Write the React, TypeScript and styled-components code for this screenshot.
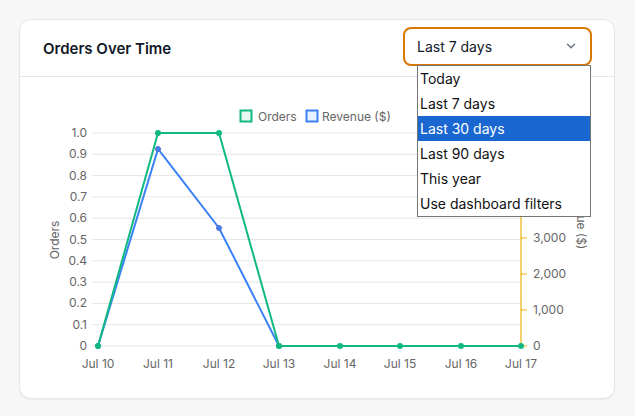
import React from "react";
import styled, { createGlobalStyle } from "styled-components";

const Global = createGlobalStyle`
  body { margin: 0; background: #f7f7f8; font-family: Inter, "Noto Sans", sans-serif; }
`;
const Page = styled.div`padding: 19px 20px 0 19px; width: 635px; height: 416px; box-sizing: border-box;`;
const Card = styled.div`
  position: relative; width: 596px; height: 380px; box-sizing: border-box;
  background: #fff; border: 1px solid #e5e7eb; border-radius: 12px;
  box-shadow: 0 1px 2px rgba(0,0,0,0.06);
`;
const Header = styled.div`
  height: 57px; box-sizing: border-box; border-bottom: 1px solid #e5e7eb;
  display: flex; align-items: center; justify-content: space-between; padding: 0 22px 0 23px;
`;
const Title = styled.h3`margin: 0; font-size: 15px; font-weight: 600; color: #111827;`;
const Select = styled.div`
  width: 189px; height: 39px; box-sizing: border-box; border: 2px solid #d97706; border-radius: 8px;
  display: flex; align-items: center; justify-content: space-between; padding: 0 12px;
  font-size: 14px; color: #111827; margin-top: -4px;
`;
const Menu = styled.div`
  position: absolute; left: 397px; top: 45px; width: 174px; box-sizing: border-box;
  background: #fff; border: 1px solid #767676; z-index: 2;
`;
const Item = styled.div<{ $active?: boolean }>`
  height: 25px; line-height: 25px; padding-left: 2px; font-size: 14px;
  background: ${p => (p.$active ? "#1a67d2" : "#fff")};
  color: ${p => (p.$active ? "#fff" : "#111")};
`;
const Chart = styled.svg`display: block;`;

const xs = [98, 158, 219, 279, 340, 400, 461, 521];
const labels = ["Jul 10","Jul 11","Jul 12","Jul 13","Jul 14","Jul 15","Jul 16","Jul 17"];
const y0 = 346, y1 = 133;
const oy = (v: number) => y0 - (y0 - y1) * v;
const orders = [0,1,1,0,0,0,0,0];
const blue: [number, number][] = [[98,346],[158,149],[219,228],[279,346]];
const green = "#10b981";
const blueC = "#3b82f6";

export default function App() {
  const grid = Array.from({ length: 11 }, (_, i) => i / 10);
  return (
    <Page>
      <Global />
      <Card>
        <Header>
          <Title>Orders Over Time</Title>
          <Select>
            <span>Last 7 days</span>
            <svg width="14" height="14" viewBox="0 0 24 24" fill="none" stroke="#6b7280" strokeWidth="2.5" strokeLinecap="round" strokeLinejoin="round"><path d="m6 9 6 6 6-6" /></svg>
          </Select>
        </Header>
        <Menu>
          {["Today","Last 7 days","Last 30 days","Last 90 days","This year","Use dashboard filters"].map(t => (
            <Item key={t} $active={t === "Last 30 days"}>{t}</Item>
          ))}
        </Menu>
        <Chart width="594" height="320" viewBox="0 0 594 320">
          <g transform="translate(-20,-77)" fontFamily="Inter, sans-serif" fontSize="12" fill="#666">
            {grid.map(g => (
              <g key={g}>
                <line x1={92} x2={521} y1={oy(g)} y2={oy(g)} stroke="#e5e5e5" />
                <text x={87} y={oy(g) + 4} textAnchor="end">{g === 0 ? "0" : g.toFixed(1)}</text>
              </g>
            ))}
            {labels.map((l, i) => (
              <text key={l} x={xs[i]} y={368} textAnchor="middle">{l}</text>
            ))}
            <text transform="translate(59,240) rotate(-90)" textAnchor="middle">Orders</text>
            <line x1={521} x2={521} y1={100} y2={346} stroke="#eab308" strokeWidth="1.2" />
            {[0,1000,2000,3000].map(v => {
              const y = 346 - v * 0.036;
              return (
                <g key={v}>
                  <line x1={521} x2={527} y1={y} y2={y} stroke="#eab308" />
                  <text x={533} y={y + 4}>{v === 0 ? "0" : v.toLocaleString("en-US")}</text>
                </g>
              );
            })}
            <text transform="translate(577,215) rotate(90)" textAnchor="middle">Revenue ($)</text>
            <rect x={240.5} y={110.5} width={11} height={11} fill="#e7f8f1" stroke={green} strokeWidth="2" />
            <text x={258} y={121}>Orders</text>
            <rect x={306.5} y={110.5} width={11} height={11} fill="#eaf1fe" stroke={blueC} strokeWidth="2" />
            <text x={322} y={121}>Revenue ($)</text>
            <polyline points={blue.map(p => p.join(",")).join(" ")} fill="none" stroke={blueC} strokeWidth="2" />
            {blue.map((p, i) => <circle key={i} cx={p[0]} cy={p[1]} r={2.5} fill={blueC} stroke="#5a6fd0" />)}
            <polyline points={xs.map((x, i) => `${x},${oy(orders[i])}`).join(" ")} fill="none" stroke={green} strokeWidth="2" />
            {xs.map((x, i) => <circle key={i} cx={x} cy={oy(orders[i])} r={3} fill={green} />)}
          </g>
        </Chart>
      </Card>
    </Page>
  );
}
